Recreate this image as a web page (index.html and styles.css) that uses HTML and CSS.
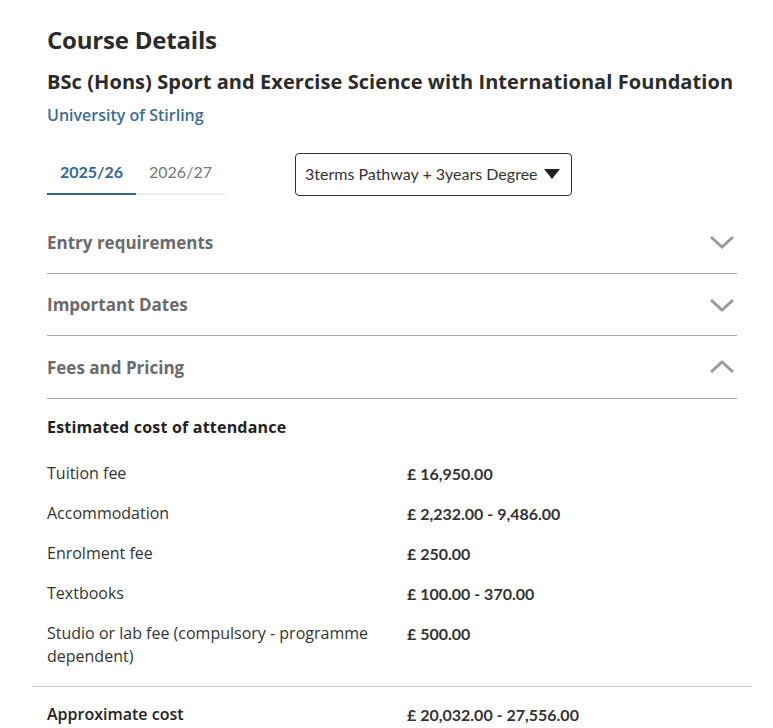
FILE: index.html
```html
<!DOCTYPE html>
<html lang="en">
<head>
<meta charset="utf-8">
<title>Course Details</title>
<link rel="stylesheet" href="styles.css">
</head>
<body>
<main class="page">
  <h1 class="title">Course Details</h1>
  <h2 class="course">BSc (Hons) Sport and Exercise Science with International Foundation</h2>
  <div class="uni">University of Stirling</div>

  <div class="controls">
    <div class="tabs">
      <div class="tab active">2025/26</div>
      <div class="tab">2026/27</div>
    </div>
    <div class="select">
      <span>3terms Pathway + 3years Degree</span>
      <svg class="tri" width="16" height="10" viewBox="0 0 16 10"><polygon points="0,0 16,0 8,10" fill="#222"/></svg>
    </div>
  </div>

  <section class="acc">
    <div class="acc-head">
      <span>Entry requirements</span>
      <svg class="chev" width="26" height="16" viewBox="0 0 26 16"><polyline points="2,3 13,13 24,3" fill="none" stroke="#9a9a9a" stroke-width="3"/></svg>
    </div>
  </section>
  <section class="acc">
    <div class="acc-head">
      <span>Important Dates</span>
      <svg class="chev" width="26" height="16" viewBox="0 0 26 16"><polyline points="2,3 13,13 24,3" fill="none" stroke="#9a9a9a" stroke-width="3"/></svg>
    </div>
  </section>
  <section class="acc open">
    <div class="acc-head">
      <span>Fees and Pricing</span>
      <svg class="chev" width="26" height="16" viewBox="0 0 26 16"><polyline points="2,13 13,3 24,13" fill="none" stroke="#9a9a9a" stroke-width="3"/></svg>
    </div>
  </section>

  <div class="fees">
    <h3 class="fees-title">Estimated cost of attendance</h3>
    <div class="rows">
      <div class="row"><div class="label">Tuition fee</div><div class="value">£ 16,950.00</div></div>
      <div class="row"><div class="label">Accommodation</div><div class="value">£ 2,232.00 - 9,486.00</div></div>
      <div class="row"><div class="label">Enrolment fee</div><div class="value">£ 250.00</div></div>
      <div class="row"><div class="label">Textbooks</div><div class="value">£ 100.00 - 370.00</div></div>
      <div class="row"><div class="label">Studio or lab fee (compulsory - programme dependent)</div><div class="value">£ 500.00</div></div>
    </div>
    <div class="total">
      <div class="row"><div class="label strong">Approximate cost</div><div class="value">£ 20,032.00 - 27,556.00</div></div>
    </div>
  </div>
</main>
</body>
</html>
```

FILE: styles.css
```css
* { box-sizing: border-box; }
html, body { margin: 0; padding: 0; background: #fff; }
body { font-family: "Open Sans", "Noto Sans", sans-serif; color: #2b2b2b; }

.page { width: 690px; margin-left: 47px; padding-top: 23px; }

.title { margin: 0; font-size: 24px; line-height: 34px; font-weight: 700; color: #2b2b2b; letter-spacing: -0.2px; }
.course { margin: 12px 0 0; font-size: 20px; line-height: 26px; font-weight: 700; color: #2b2b2b; white-space: nowrap; letter-spacing: 0.07px; }
.uni { margin-top: 9px; font-size: 16px; line-height: 22px; font-weight: 600; color: #3d6b98; }

.controls { display: flex; align-items: flex-end; gap: 70px; margin-top: 25px; }
.tabs { display: flex; }
.tab { width: 89px; text-align: center; font-family: Lato, sans-serif; font-size: 16px; line-height: 20px; padding: 11px 0 11px; color: #777; border-bottom: 2px solid #ececec; }
.tab.active { color: #2f679c; font-weight: 700; border-bottom-color: #2f679c; }

.select { width: 277px; height: 43px; border: 1px solid #333; border-radius: 4px; display: flex; align-items: center; justify-content: space-between; padding: 0 11px 3px 9px; font-family: Lato, sans-serif; font-size: 16px; color: #333; margin-bottom: -1px; }
.tri { margin-top: 2px; }

.acc { border-bottom: 1px solid #aaa; }
.acc:first-of-type { margin-top: 16px; }
.acc-head { height: 61px; display: flex; align-items: center; justify-content: space-between; font-size: 17px; font-weight: 700; color: #6b6b6b; padding-right: 2px; }
.acc:first-of-type .acc-head { height: 62px; }
.acc.open .acc-head { height: 62px; }

.fees { padding-top: 16px; }
.fees-title { margin: 0; font-size: 16px; line-height: 24px; font-weight: 700; color: #222; letter-spacing: 0.2px; }
.rows { margin-top: 15px; padding-bottom: 9px; border-bottom: 1px solid #ccc; margin-left: -15px; margin-right: -15px; padding-left: 15px; padding-right: 15px; }
.row { display: flex; padding: 8px 0 9px; font-size: 16px; line-height: 23px; }
.label { width: 360px; padding-right: 20px; color: #333; }
.label.strong { font-weight: 600; color: #222; }
.value { font-family: Lato, sans-serif; font-weight: 700; color: #333; }
.total { padding-top: 8px; }
```
